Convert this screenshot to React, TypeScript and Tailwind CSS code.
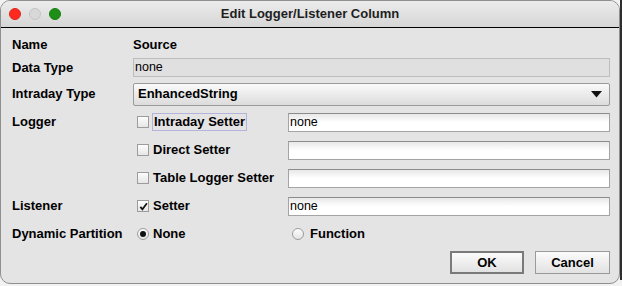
import React from "react";

const font = { fontFamily: '"Liberation Sans", Arial, sans-serif' };

function Check({ checked }: { checked?: boolean }) {
  return (
    <div className="w-[12px] h-[12px] border border-[#9c9c9c] bg-gradient-to-b from-[#fdfdfd] to-[#e6e6e6] flex items-center justify-center shrink-0">
      {checked && (
        <svg width="9" height="9" viewBox="0 0 10 10">
          <path d="M1.5 5.4 L3.8 8.2 L8.8 1.4" stroke="#111" strokeWidth="1.9" fill="none" />
        </svg>
      )}
    </div>
  );
}

function Radio({ checked }: { checked?: boolean }) {
  return (
    <div className="w-[12px] h-[12px] rounded-full border border-[#9c9c9c] bg-gradient-to-b from-[#fdfdfd] to-[#e4e4e4] flex items-center justify-center shrink-0">
      {checked && <div className="w-[6px] h-[6px] rounded-full bg-[#111]" />}
    </div>
  );
}

function Field({ value }: { value?: string }) {
  return (
    <div className="flex-1 h-[19px] border border-[#a4a4a4] border-t-[#8c8c8c] bg-gradient-to-b from-[#e8e8e8] via-[#ffffff] to-[#ffffff] flex items-center pl-[1px] text-[12.5px] text-black">
      {value}
    </div>
  );
}

export default function App() {
  return (
    <div className="w-[622px] h-[286px] bg-[#f2f2f2] flex" style={font}>
      <div className="w-[620px] h-[284px] rounded-[10px] border border-[#8f8f8f] bg-[#e4e4e4] overflow-hidden flex flex-col">
        {/* title bar */}
        <div className="h-[27px] shrink-0 bg-gradient-to-b from-[#ececec] to-[#d6d6d6] border-b border-black flex items-center relative">
          <div className="flex items-center gap-[8px] pl-[8px]">
            <div className="w-[12px] h-[12px] rounded-full bg-[#fe2a1f] border border-[#e0241b]" />
            <div className="w-[12px] h-[12px] rounded-full bg-[#d8d8d8] border border-[#c4c4c4]" />
            <div className="w-[12px] h-[12px] rounded-full bg-[#1e8f16] border border-[#1a7d13]" />
          </div>
          <div className="absolute inset-0 flex items-center justify-center text-[13px] font-bold text-[#1e1e1e]">
            Edit Logger/Listener Column
          </div>
        </div>

        {/* body */}
        <div className="flex flex-col pt-[8px] pl-[11px] pr-[9px] text-[13px] text-black whitespace-nowrap">
          <div className="h-[18px] flex items-center">
            <div className="w-[121px] font-bold">Name</div>
            <div className="font-bold">Source</div>
          </div>
          <div className="h-[27px] flex items-center">
            <div className="w-[121px] font-bold">Data Type</div>
            <div className="flex-1 h-[19px] border border-[#bdbdbd] bg-[#e0e0e0] flex items-center pl-[1px] text-[12.5px]">none</div>
          </div>
          <div className="h-[26px] flex items-center">
            <div className="w-[121px] font-bold">Intraday Type</div>
            <div className="flex-1 h-[23px] border border-[#9a9a9a] rounded-[2px] bg-gradient-to-b from-[#fafafa] to-[#dcdcdc] flex items-center pl-[4px] pr-[7px] font-bold">
              <span className="flex-1">EnhancedString</span>
              <svg width="11" height="7" viewBox="0 0 11 7">
                <path d="M0 0 H11 L5.5 6.5 Z" fill="#111" />
              </svg>
            </div>
          </div>

          <div className="mt-[1px] h-[28px] flex items-center">
            <div className="w-[125px] font-bold">Logger</div>
            <Check />
            <div className="ml-[3px] w-[95px] h-[18px] border border-[#b3b3dc] flex items-center pl-[1px] font-bold">Intraday Setter</div>
            <div className="w-[41px]" />
            <Field value="none" />
          </div>
          <div className="h-[28px] flex items-center">
            <div className="w-[125px]" />
            <Check />
            <div className="ml-[4px] w-[135px] font-bold">Direct Setter</div>
            <Field />
          </div>
          <div className="h-[28px] flex items-center">
            <div className="w-[125px]" />
            <Check />
            <div className="ml-[4px] w-[135px] font-bold">Table Logger Setter</div>
            <Field />
          </div>
          <div className="h-[28px] flex items-center">
            <div className="w-[125px] font-bold">Listener</div>
            <Check checked />
            <div className="ml-[4px] w-[135px] font-bold">Setter</div>
            <Field value="none" />
          </div>
          <div className="h-[28px] flex items-center">
            <div className="w-[125px] font-bold">Dynamic Partition</div>
            <Radio checked />
            <div className="ml-[4px] w-[139px] font-bold">None</div>
            <Radio />
            <div className="ml-[6px] font-bold">Function</div>
          </div>

          <div className="mt-[3px] flex justify-end gap-[11px]">
            <div className="w-[74px] h-[23px] border-2 border-[#7a7a7a] bg-gradient-to-b from-[#fbfbfb] to-[#e2e2e2] flex items-center justify-center font-bold">
              OK
            </div>
            <div className="w-[75px] h-[23px] border border-[#9a9a9a] bg-gradient-to-b from-[#fbfbfb] to-[#e2e2e2] flex items-center justify-center font-bold">
              Cancel
            </div>
          </div>
        </div>
      </div>
      <div className="w-[2px] h-[280px] bg-[#2e2e2e]" />
    </div>
  );
}
